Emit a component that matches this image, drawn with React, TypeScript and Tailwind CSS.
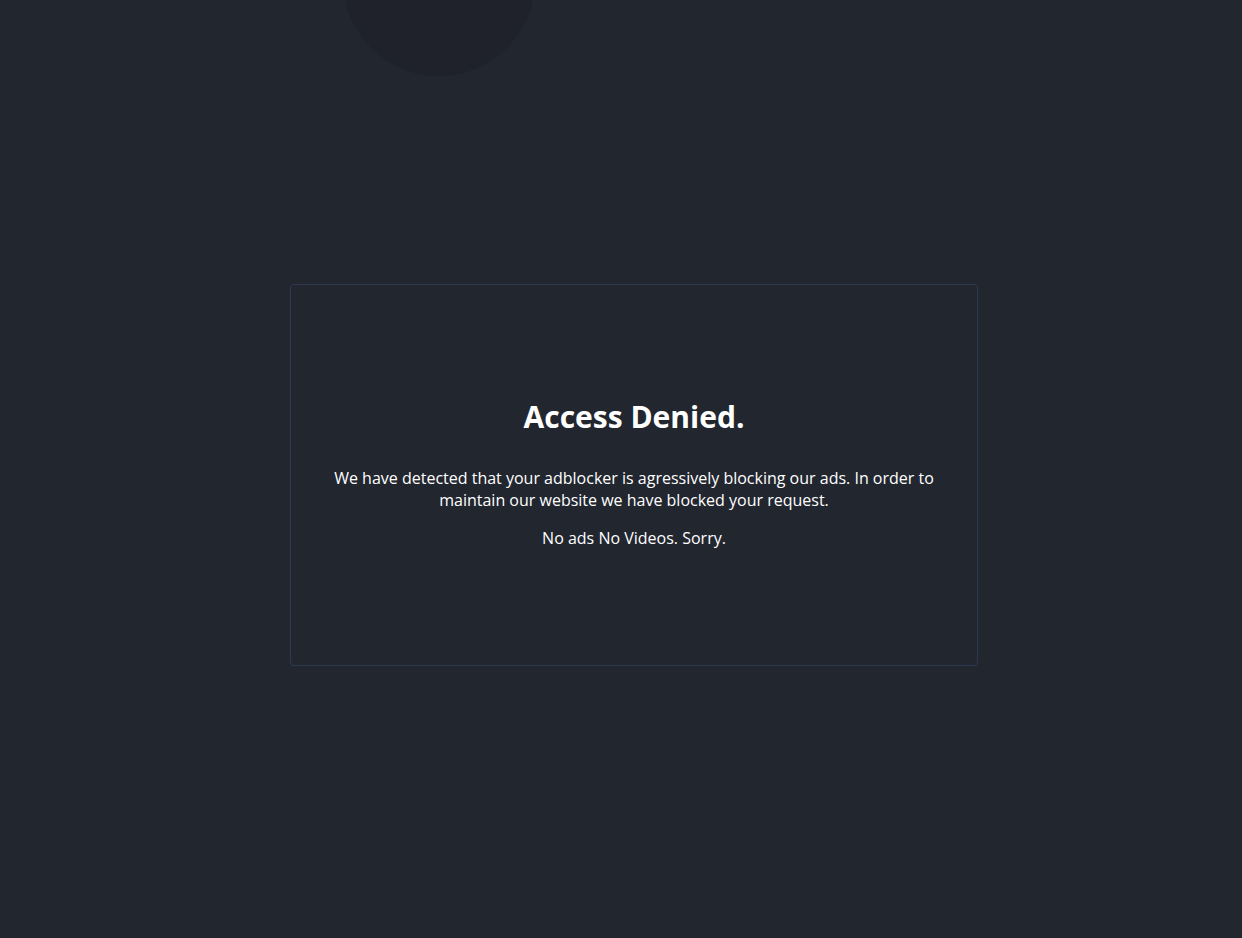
export default function App() {
  return (
    <div className="relative min-h-[938px] w-full overflow-hidden bg-[#22262f] font-['Open_Sans',sans-serif] text-white">
      {/* faint decorative disc peeking from the top edge */}
      <div className="absolute left-[343px] top-[-116px] h-[192px] w-[192px] rounded-full bg-[#1f222a]" />

      <div className="relative flex justify-center pl-[26px] pt-[284px]">
        <div className="flex h-[382px] w-[688px] flex-col items-center justify-center rounded-[4px] border border-[#2d3852] px-[40px] pb-[4px] text-center">
          <h1 className="text-[30px] font-bold leading-[40px]">Access Denied.</h1>
          <p className="mt-[30px] text-[16px] leading-[22px]">
            We have detected that your adblocker is agressively blocking our ads. In order to maintain our website we have blocked your request.
          </p>
          <p className="mt-[16px] text-[16px] leading-[22px]">No ads No Videos. Sorry.</p>
        </div>
      </div>
    </div>
  );
}
